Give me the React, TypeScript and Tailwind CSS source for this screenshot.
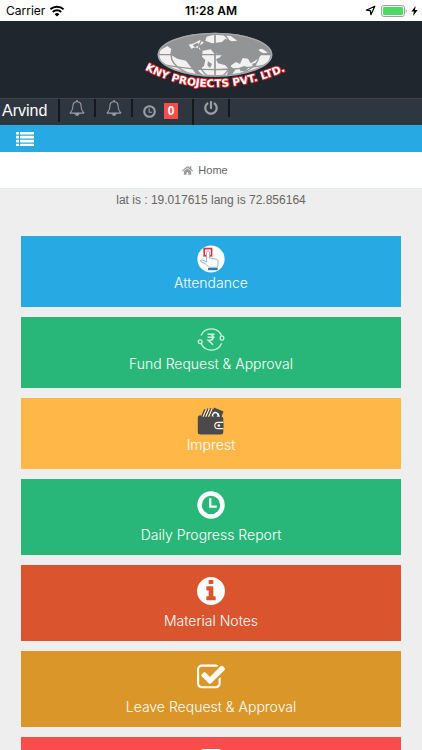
import type { ReactNode } from 'react';
import { FaHome, FaPowerOff } from 'react-icons/fa';

type IconProps = { className?: string };

function WifiIcon({ className }: IconProps) {
  return (
    <svg viewBox="0 0 16 12" className={className} aria-hidden="true" fill="none" stroke="currentColor">
      <path d="M1.4 4.3a9.6 9.6 0 0 1 13.2 0" strokeWidth="2" />
      <path d="M3.8 6.9a6.1 6.1 0 0 1 8.4 0" strokeWidth="2" />
      <path d="M8 11.6 5.6 9.2a3.5 3.5 0 0 1 4.8 0z" fill="currentColor" stroke="none" />
    </svg>
  );
}

function LocationIcon({ className }: IconProps) {
  return (
    <svg viewBox="0 0 11 11" className={className} aria-hidden="true" fill="none" stroke="currentColor">
      <path d="M1.4 5.2 9.8 1.2 5.9 9.7 5.3 5.6z" strokeWidth="1.2" strokeLinejoin="round" />
    </svg>
  );
}

function BatteryIcon({ className }: IconProps) {
  return (
    <svg viewBox="0 0 26 12" className={className} aria-hidden="true">
      <rect x="0.5" y="0.5" width="23" height="11" rx="2.5" fill="none" stroke="#a0a0a0" />
      <rect x="2" y="2" width="20" height="8" rx="1.2" fill="#4cd964" />
      <path d="M24.7 4.2q1.2.6 1.2 1.8t-1.2 1.8z" fill="#a0a0a0" />
    </svg>
  );
}

function BoltIcon({ className }: IconProps) {
  return (
    <svg viewBox="0 0 7 10" className={className} aria-hidden="true">
      <path d="M4.6 0 .4 5.6h2.5L2.1 10l4.5-5.9H4z" fill="currentColor" />
    </svg>
  );
}

function BellIcon({ className }: IconProps) {
  return (
    <svg viewBox="0 0 1792 1792" className={className} aria-hidden="true" fill="currentColor">
      <path d="M912 1696q0-16-16-16-59 0-101.5-42.5t-42.5-101.5q0-16-16-16t-16 16q0 73 51.5 124.5t124.5 51.5q16 0 16-16zm-666-288h1300q-266-300-266-832 0-51-24-105t-69-103-121.5-80.5-169.5-31.5-169.5 31.5-121.5 80.5-69 103-24 105q0 532-266 832zm1482 0q0 52-38 90t-90 38h-448q0 106-75 181t-181 75-181-75-75-181h-448q-52 0-90-38t-38-90q50-42 91-88t85-119.5 74.5-158.5 50-206 19.5-260q0-152 117-282.5t307-158.5q-8-19-8-39 0-40 28-68t68-28 68 28 28 68q0 20-8 39 190 28 307 158.5t117 282.5q0 139 19.5 260t50 206 74.5 158.5 85 119.5 91 88z" />
    </svg>
  );
}

function ClockIcon({ className }: IconProps) {
  return (
    <svg viewBox="0 0 27 27" className={className} aria-hidden="true" fill="none" stroke="currentColor">
      <circle cx="13.5" cy="13.5" r="11" strokeWidth="4.4" />
      <path d="M12.8 7v8h6.2" strokeWidth="2.2" />
    </svg>
  );
}

function InfoIcon({ className }: IconProps) {
  return (
    <svg viewBox="128 128 1536 1536" className={className} aria-hidden="true" fill="currentColor">
      <path d="M1152 1376v-160q0-14-9-23t-23-9h-96v-512q0-14-9-23t-23-9h-320q-14 0-23 9t-9 23v160q0 14 9 23t23 9h96v320h-96q-14 0-23 9t-9 23v160q0 14 9 23t23 9h448q14 0 23-9t9-23zm-128-896v-160q0-14-9-23t-23-9h-192q-14 0-23 9t-9 23v160q0 14 9 23t23 9h192q14 0 23-9t9-23zm640 416q0 209-103 385.5t-279.5 279.5-385.5 103-385.5-103-279.5-279.5-103-385.5 103-385.5 279.5-279.5 385.5-103 385.5 103 279.5 279.5 103 385.5z" />
    </svg>
  );
}

function ListIcon({ className }: IconProps) {
  return (
    <svg viewBox="0 0 18 14" className={className} aria-hidden="true" fill="currentColor">
      {[0, 4, 8, 12].map((y) => (
        <g key={y}>
          <rect x="0" y={y - 0.3} width="3" height="2.8" rx="0.4" />
          <rect x="4" y={y - 0.3} width="14" height="2.8" rx="0.4" />
        </g>
      ))}
    </svg>
  );
}

function CheckSquareIcon({ className }: IconProps) {
  return (
    <svg viewBox="64 128 1664 1472" className={className} aria-hidden="true" fill="currentColor">
      <path d="M1472 930v318q0 119-84.5 203.5t-203.5 84.5h-832q-119 0-203.5-84.5t-84.5-203.5v-832q0-119 84.5-203.5t203.5-84.5h832q63 0 117 25 15 7 18 23 3 17-9 29l-49 49q-10 10-23 10-3 0-9-2-23-6-45-6h-832q-66 0-113 47t-47 113v832q0 66 47 113t113 47h832q66 0 113-47t47-113v-254q0-13 9-22l64-64q10-10 23-10 6 0 12 3 20 8 20 29zm231-489l-814 814q-24 24-57 24t-57-24l-430-430q-24-24-24-57t24-57l110-110q24-24 57-24t57 24l263 263 647-647q24-24 57-24t57 24l110 110q24 24 24 57t-24 57z" />
    </svg>
  );
}

function TouchIcon({ className }: IconProps) {
  return (
    <svg viewBox="0 0 28 28" className={className} aria-hidden="true">
      <circle cx="14" cy="14" r="13.6" fill="#fff" />
      <rect x="7.2" y="3.6" width="7.4" height="7.2" fill="none" stroke="#e8333c" strokeWidth="1.7" />
      <path
        d="M9.6 17V7.8q0-1.7 1.5-1.7t1.5 1.7V13l6.5 1.2q2.2.5 2.1 2.6l-.7 5.5h-8.5l-3.4-3.4-4.8-2.3q-.8-1.8 1.2-1.8z"
        fill="#fff"
        stroke="#8fb3dc"
        strokeWidth="1"
        strokeLinejoin="round"
      />
      <path d="M11 23h9.6v2.2H11z" fill="#2c78b8" />
    </svg>
  );
}

function RupeeIcon({ className }: IconProps) {
  return (
    <svg viewBox="0 0 28 28" className={className} aria-hidden="true" fill="none" stroke="#c9f5dc" strokeWidth="1.3">
      <path d="M4 9.5A11.2 11.2 0 0 1 24.7 10" />
      <path d="M24.6 17.2A11.2 11.2 0 0 1 4.3 18" />
      <circle cx="3.2" cy="15.8" r="1.9" />
      <rect x="23.2" y="10.2" width="3.6" height="4" rx="1.4" />
      <path d="M10.6 8.2h7M10.6 11.2h7M11 8.2h2.2q2.9.2 2.9 3t-2.9 3h-2l4.8 4.6" strokeWidth="1.5" />
    </svg>
  );
}

function WalletIcon({ className }: IconProps) {
  return (
    <svg viewBox="0 0 28 28" className={className} aria-hidden="true">
      <path d="M13.5 10 17 .5l9.5 4-2.2 6z" fill="#4a4a4a" />
      <path d="M14.6 9.5q.6-4.7 3.6-4.7 3.8.4 4.7 5.2z" fill="#fff" />
      <circle cx="18.3" cy="8.2" r="2" fill="#4a4a4a" />
      <path d="M4.6 10 8 2.2M7.2 10l3.6-8.4M10 10l3.7-8.6M12.7 10l3.4-8" fill="none" stroke="#4a4a4a" strokeWidth="1.6" />
      <path d="M6 10l3.4-7.8M8.7 10l3.5-8M11.5 10 15 2" fill="none" stroke="#fff" strokeWidth=".9" />
      <path d="M3.4 8.3q-2.6.2-2.6 2.7V25q0 2.5 2.6 2.5h20.5q2.4 0 2.4-2.5V11.4q0-1.6-1.8-1.6H5z" fill="#4a4a4a" />
      <path d="M26.3 15.3h-5.2q-3.3 0-3.3 3.2t3.3 3.2h5.2" fill="#4a4a4a" stroke="#fff3dd" strokeWidth="1.2" />
      <circle cx="21.8" cy="18.5" r="1.3" fill="#fff" />
    </svg>
  );
}

function FileIcon({ className }: IconProps) {
  return (
    <svg viewBox="0 0 27 27" className={className} aria-hidden="true" fill="none" stroke="currentColor">
      <rect x="5" y="1.5" width="17" height="24" rx="1.5" strokeWidth="3" />
      <path d="M9 11h9M9 15h9M9 19h6" strokeWidth="2" />
    </svg>
  );
}

function Logo() {
  return (
    <svg viewBox="0 0 510 228" className="h-[76px] w-[170px]" role="img" aria-label="KNY Projects Pvt. Ltd.">
      <defs>
        <clipPath id="globe">
          <ellipse cx="255" cy="98" rx="168" ry="61" />
        </clipPath>
        <path id="arc" d="M44 142Q245 254 500 132" />
      </defs>
      <ellipse cx="255" cy="98" rx="172" ry="66" fill="#929496" />
      <g clipPath="url(#globe)">
        {/* oceans */}
        <g fill="#f3f0f0">
          <path d="M84 104 92 84 112 72 128 84 122 98 142 110 168 116 180 132 198 156 170 156 130 142 88 120z" />
          <path d="M176 68 192 64 210 54 222 62 206 72 212 84 196 76 184 80z" />
          <path d="M230 44 252 38 302 42 322 56 306 58 286 50 276 60 246 64 226 56z" />
          <path d="M218 86 242 82 252 94 276 98 270 106 258 112 264 124 286 130 296 142 290 162 222 162 204 146 222 132 226 114 216 104z" />
          <path d="M300 132 318 120 330 126 338 108 354 110 362 124 382 112 394 98 422 98 414 122 376 146 332 156 304 160 316 144z" />
          <path d="M382 84 396 80 414 92 400 94z" />
        </g>
        {/* islands */}
        <g fill="#929496">
          <path d="M234 118l12 8-6 12-8-8zM328 138l14-6 14 4-8 10-16 2z" />
          <path d="M188 70l14-8 6 6-12 8zM366 126l10-4 4 8-10 4z" />
        </g>
        <g fill="none" stroke="#929496" strokeWidth="4">
          <path d="M255 32v132" strokeWidth="5" />
          <path d="M84 98h342M98 128q157 30 314 0" />
          <ellipse cx="255" cy="98" rx="52" ry="70" />
          <ellipse cx="255" cy="98" rx="132" ry="70" />
        </g>
      </g>
      <ellipse cx="255" cy="98" rx="170" ry="64" fill="none" stroke="#a7a9ab" strokeWidth="4" />
      <text
        className="font-['DejaVu_Sans','Liberation_Sans',sans-serif] text-[32px] font-bold [paint-order:stroke]"
        fill="#fff"
        stroke="#e3202b"
        strokeWidth="5"
        strokeLinejoin="round"
      >
        <textPath href="#arc">KNY PROJECTS PVT. LTD.</textPath>
      </text>
    </svg>
  );
}

type Tile = { id: string; label?: string; color: string; icon: ReactNode; compact?: boolean };

const tiles: Tile[] = [
  { id: 'attendance', label: 'Attendance', color: 'bg-[#27a9e3]', icon: <TouchIcon className="size-7" />, compact: true },
  { id: 'fund', label: 'Fund Request & Approval', color: 'bg-[#28b779]', icon: <RupeeIcon className="size-7" />, compact: true },
  { id: 'imprest', label: 'Imprest', color: 'bg-[#ffb848]', icon: <WalletIcon className="size-7" />, compact: true },
  { id: 'progress', label: 'Daily Progress Report', color: 'bg-[#28b779]', icon: <ClockIcon className="size-7" /> },
  { id: 'material', label: 'Material Notes', color: 'bg-[#da542e]', icon: <InfoIcon className="size-7" /> },
  { id: 'leave', label: 'Leave Request & Approval', color: 'bg-[#da9628]', icon: <CheckSquareIcon className="size-7" /> },
  { id: 'files', color: 'bg-[#f74d4d]', icon: <FileIcon className="size-7" /> },
];

function StatusBar() {
  return (
    <div className="grid h-[21px] grid-cols-3 items-center bg-white px-1 font-['Inter',sans-serif] text-xs text-black">
      <div className="flex items-center gap-1 pl-0.5">
        <span>Carrier</span>
        <WifiIcon className="h-3 w-4" />
      </div>
      <span className="text-center font-semibold">11:28 AM</span>
      <div className="flex items-center justify-end gap-1">
        <LocationIcon className="mr-px size-[11px]" />
        <BatteryIcon className="h-3 w-[26px]" />
        <BoltIcon className="h-[10px] w-[7px]" />
      </div>
    </div>
  );
}

function UserBar() {
  return (
    <nav className="flex h-[27px] items-start border-t border-[#3d434b] bg-[#2e363f] text-[#9aa0a5]">
      <a href="#profile" className="h-[23px] w-[60px] border-r-2 border-[#14181c] pl-0.5 text-base leading-6 text-white">
        Arvind
      </a>
      <button aria-label="Notifications" className="flex h-[18px] w-9 items-center justify-center border-r-2 border-[#14181c]">
        <BellIcon className="size-4" />
      </button>
      <button aria-label="Alerts" className="flex h-[18px] w-[37px] items-center justify-center border-r-2 border-[#14181c]">
        <BellIcon className="size-4" />
      </button>
      <button aria-label="Pending" className="flex h-[26px] w-[61px] items-center justify-center gap-2 border-r-2 border-[#14181c] pr-1 pb-0.5">
        <ClockIcon className="size-[13px]" />
        <span className="bg-[#f74d4d] px-1 text-xs leading-4 font-bold text-white">0</span>
      </button>
      <button aria-label="Log out" className="flex h-[18px] w-9 items-center justify-center border-r-2 border-[#14181c]">
        <FaPowerOff className="size-[14px]" />
      </button>
    </nav>
  );
}

export default function App() {
  return (
    <div className="min-h-screen bg-[#eee] font-['Liberation_Sans',Arial,sans-serif]">
      <StatusBar />
      <header>
        <div className="flex justify-center bg-[#1f262d] pt-px pl-2">
          <Logo />
        </div>
        <UserBar />
        <div className="flex h-[27px] items-center bg-[#27a9e3] px-4 text-white">
          <button aria-label="Menu">
            <ListIcon className="h-[14px] w-[18px]" />
          </button>
        </div>
      </header>
      <div className="flex h-[37px] items-center justify-center border-b border-[#e3ebed] bg-white pr-3">
        <a href="#home" className="flex items-center gap-[5px] text-[11px] text-[#666]">
          <FaHome className="size-[11px] text-[#999]" />
          Home
        </a>
      </div>
      <main>
        <p className="text-center text-xs leading-[22px] text-[#666]">lat is : 19.017615 lang is 72.856164</p>
        <ul className="mx-[21px] mt-[25px] flex flex-col gap-[10px] pb-5">
          {tiles.map(({ id, label, color, icon, compact }) => (
            <li key={id}>
              <a
                href={`#${id}`}
                aria-label={label ?? id}
                className={`flex flex-col items-center text-white ${color} ${compact ? 'pt-[9px] pb-[14px]' : 'gap-[6px] pt-3 pb-[10px]'}`}
              >
                {icon}
                {label && <span className="font-['Inter',sans-serif] text-sm leading-5 font-light">{label}</span>}
              </a>
            </li>
          ))}
        </ul>
      </main>
    </div>
  );
}
